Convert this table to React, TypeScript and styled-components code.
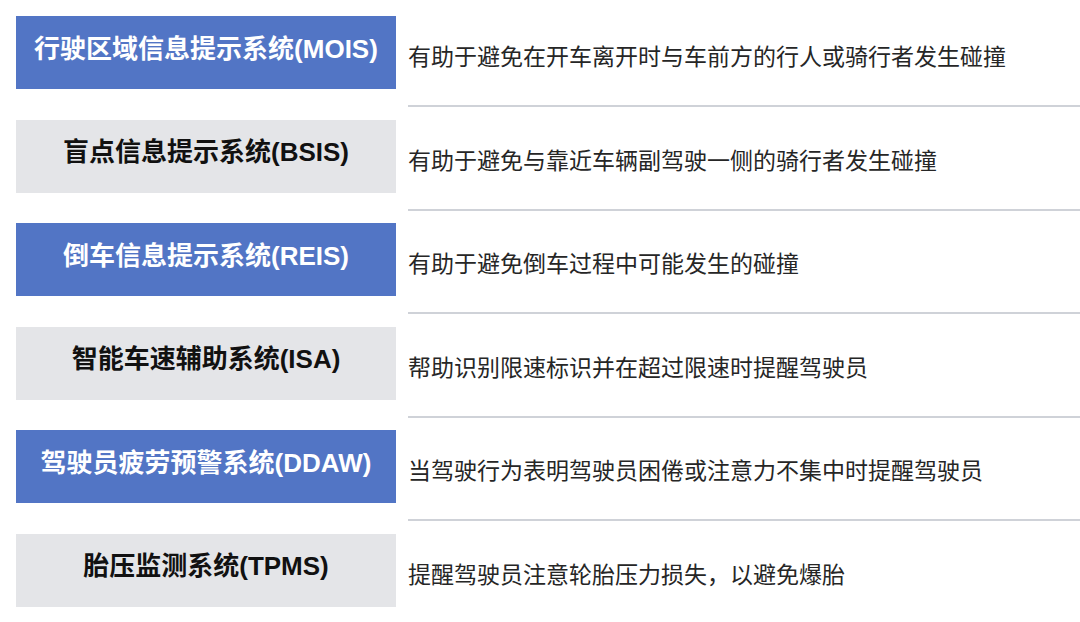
import React from "react";
import styled, { createGlobalStyle } from "styled-components";

const GlobalStyle = createGlobalStyle`
  html, body {
    margin: 0;
    padding: 0;
    background: #ffffff;
  }
  body {
    width: 1080px;
    height: 622px;
    overflow: hidden;
    font-family: "Liberation Sans", "Noto Sans CJK SC", sans-serif;
  }
`;

const List = styled.div`
  display: flex;
  flex-direction: column;
  gap: 12.6px;
  padding: 16px 0 0 16px;
  box-sizing: border-box;
  width: 1080px;
`;

const Row = styled.div`
  display: flex;
  gap: 12px;
  align-items: flex-start;
`;

const Badge = styled.div<{ $accent: boolean }>`
  width: 380px;
  height: 73px;
  flex: none;
  box-sizing: border-box;
  padding-bottom: 8px;
  display: flex;
  align-items: center;
  justify-content: center;
  background: ${(p) => (p.$accent ? "#5275c5" : "#e4e5e8")};
  color: ${(p) => (p.$accent ? "#ffffff" : "#111111")};
  font-family: "Liberation Sans", "Noto Sans CJK SC", sans-serif;
  font-weight: 700;
  font-size: 26px;
  line-height: 30px;
  white-space: nowrap;
`;

const Desc = styled.div<{ $last: boolean }>`
  flex: 1;
  height: 91px;
  box-sizing: border-box;
  padding-top: 25px;
  border-bottom: ${(p) => (p.$last ? "none" : "2px solid #cfd2d8")};
  color: #262626;
  font-family: "Noto Sans CJK SC", "Liberation Sans", sans-serif;
  font-size: 23px;
  line-height: 28px;
  white-space: nowrap;
`;

const rows = [
  { title: "行驶区域信息提示系统(MOIS)", desc: "有助于避免在开车离开时与车前方的行人或骑行者发生碰撞", accent: true },
  { title: "盲点信息提示系统(BSIS)", desc: "有助于避免与靠近车辆副驾驶一侧的骑行者发生碰撞", accent: false },
  { title: "倒车信息提示系统(REIS)", desc: "有助于避免倒车过程中可能发生的碰撞", accent: true },
  { title: "智能车速辅助系统(ISA)", desc: "帮助识别限速标识并在超过限速时提醒驾驶员", accent: false },
  { title: "驾驶员疲劳预警系统(DDAW)", desc: "当驾驶行为表明驾驶员困倦或注意力不集中时提醒驾驶员", accent: true },
  { title: "胎压监测系统(TPMS)", desc: "提醒驾驶员注意轮胎压力损失，以避免爆胎", accent: false },
];

export default function App() {
  return (
    <>
      <GlobalStyle />
      <List>
        {rows.map((r, i) => (
          <Row key={r.title}>
            <Badge $accent={r.accent}>{r.title}</Badge>
            <Desc $last={i === rows.length - 1}>{r.desc}</Desc>
          </Row>
        ))}
      </List>
    </>
  );
}
